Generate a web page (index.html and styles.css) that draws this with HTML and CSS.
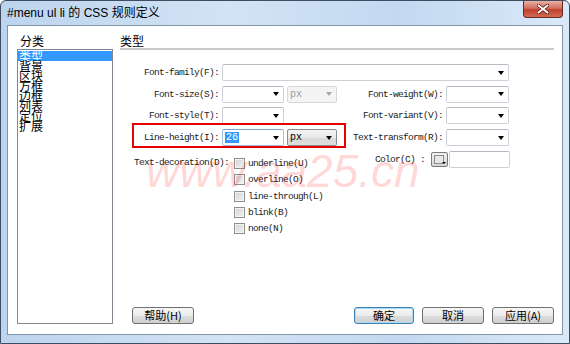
FILE: index.html
```html
<!DOCTYPE html>
<html lang="zh-CN">
<head>
    <meta charset="UTF-8">
    <title>#menu ul li 的 CSS 规则定义</title>
    <link rel="stylesheet" href="styles.css">
</head>
<body>

<div class="window">
    <div class="titlebar">
        <span class="title">#menu ul li 的 CSS 规则定义</span>
        <div class="close">
            <svg width="12" height="10" viewBox="0 0 12 10">
                <path d="M1.5 1.5 L10.5 8.5 M10.5 1.5 L1.5 8.5" stroke="#5a1a12" stroke-width="3.4" stroke-linecap="square"/>
                <path d="M1.5 1.5 L10.5 8.5 M10.5 1.5 L1.5 8.5" stroke="#ffffff" stroke-width="1.8" stroke-linecap="square"/>
            </svg>
        </div>
    </div>

    <div class="client">
        <div class="side">
            <div class="side-label">分类</div>
            <ul class="cat-list">
                <li class="active">类型</li>
                <li>背景</li>
                <li>区块</li>
                <li>方框</li>
                <li>边框</li>
                <li>列表</li>
                <li>定位</li>
                <li>扩展</li>
            </ul>
        </div>

        <div class="panel">
            <div class="panel-head">类型</div>

            <div class="form">
                <label class="lbl">Font-family(F):</label>
                <div class="combo wide"><span class="val"></span><span class="arrow"></span></div>

                <label class="lbl">Font-size(S):</label>
                <div class="combo"><span class="val"></span><span class="arrow"></span></div>
                <div class="combo disabled"><span class="val">px</span><span class="arrow"></span></div>
                <label class="lbl">Font-weight(W):</label>
                <div class="combo"><span class="val"></span><span class="arrow"></span></div>

                <label class="lbl">Font-style(T):</label>
                <div class="combo"><span class="val"></span><span class="arrow"></span></div>
                <div></div>
                <label class="lbl">Font-variant(V):</label>
                <div class="combo"><span class="val"></span><span class="arrow"></span></div>

                <label class="lbl">Line-height(I):</label>
                <div class="combo focus"><span class="val"><span class="sel">26</span></span><span class="arrow"></span></div>
                <div class="combo button"><span class="val">px</span><span class="arrow"></span></div>
                <label class="lbl">Text-transform(R):</label>
                <div class="combo"><span class="val"></span><span class="arrow"></span></div>

                <div class="mark"></div>
            </div>

            <div class="deco">
                <label class="lbl deco-label">Text-decoration(D):</label>
                <div class="checks">
                    <div class="check"><span class="box"></span>underline(U)</div>
                    <div class="check"><span class="box"></span>overline(O)</div>
                    <div class="check"><span class="box"></span>line-through(L)</div>
                    <div class="check"><span class="box"></span>blink(B)</div>
                    <div class="check"><span class="box"></span>none(N)</div>
                </div>
                <div class="color-group">
                    <label class="lbl color-label">Color(C) :</label>
                    <div class="swatch"><span class="swatch-in"></span><span class="swatch-arrow"></span></div>
                    <div class="text-input"></div>
                </div>
            </div>

            <div class="watermark">www.aa25.cn</div>

            <div class="buttons">
                <div class="btn help">帮助(H)</div>
                <div class="btn default">确定</div>
                <div class="btn">取消</div>
                <div class="btn">应用(A)</div>
            </div>
        </div>
    </div>
</div>

</body>
</html>
```

FILE: styles.css
```css
* {
    box-sizing: border-box;
}

body {
    margin: 0;
    font-family: "Noto Sans", "Noto Sans CJK SC", sans-serif;
    font-size: 12px;
    color: #000;
    background: #fff;
}

.window {
    width: 570px;
    height: 344px;
    border: 1px solid #3e4d60;
    border-radius: 6px 6px 0 0;
    background: linear-gradient(to right, #bcd4ee, #d2e3f5 40%, #c3d9f1 70%, #d9e9f8);
    display: flex;
    flex-direction: column;
    overflow: hidden;
}

.titlebar {
    height: 24px;
    display: flex;
    align-items: flex-start;
    padding-left: 6px;
}

.title {
    line-height: 24px;
    font-family: "Liberation Sans", "Noto Sans CJK SC", sans-serif;
    font-size: 12px;
    color: #000;
}

.close {
    margin-left: auto;
    margin-right: 6px;
    width: 40px;
    height: 17px;
    border: 1px solid #6a2a22;
    border-top: none;
    border-radius: 0 0 4px 4px;
    background: linear-gradient(#e8b0a4, #d26e5c 45%, #c0412d 55%, #d06a52);
    display: flex;
    align-items: center;
    justify-content: center;
}

.client {
    margin: 0 6px 8px;
    height: 310px;
    border: 1px solid #8596ab;
    background: #fff;
    display: flex;
    padding: 8px 8px 10px 9px;
}

.side {
    width: 96px;
    display: flex;
    flex-direction: column;
}

.side-label {
    line-height: 14px;
    padding-left: 3px;
    font-family: "Noto Sans CJK SC", sans-serif;
}

.cat-list {
    flex: 1;
    list-style: none;
    margin: 1px 0 0;
    padding: 1px 0 0;
    border: 1px solid #828790;
    font-family: "Noto Sans CJK SC", sans-serif;
    font-size: 12px;
}

.cat-list li {
    line-height: 10px;
    height: 10px;
    padding-left: 1px;
    overflow: visible;
}

.cat-list li.active {
    background: #3399ff;
    color: #fff;
}

.panel {
    width: 434px;
    margin-left: 7px;
    display: flex;
    flex-direction: column;
    position: relative;
}

.panel-head {
    line-height: 14px;
    border-bottom: 2px solid #cacaca;
    font-family: "Noto Sans CJK SC", sans-serif;
}

.lbl {
    font-family: "Liberation Mono", monospace;
    font-size: 9.5px;
    letter-spacing: -0.7px;
    color: #222;
    white-space: nowrap;
}

.form {
    margin-top: 14px;
    margin-left: 0;
    display: grid;
    grid-template-columns: 99px 62px 50px 103px 63px;
    grid-auto-rows: 17px;
    column-gap: 3px;
    row-gap: 4.7px;
    position: relative;
}

.form .lbl {
    display: flex;
    align-items: center;
    justify-content: flex-end;
}

.combo {
    height: 17px;
    border: 1px solid #ccd1d9;
    border-top-color: #b5bac3;
    border-radius: 2px;
    background: #fff;
    display: flex;
    align-items: center;
    padding: 0 4px 0 2px;
}

.combo.wide {
    grid-column: 2 / 6;
}

.combo .val {
    flex: 1;
    font-family: "Liberation Mono", monospace;
    font-size: 10px;
}

.arrow {
    width: 0;
    height: 0;
    border-left: 3.5px solid transparent;
    border-right: 3.5px solid transparent;
    border-top: 4px solid #000;
}

.combo.disabled {
    background: #f4f4f4;
    border-color: #d8d8d8;
    color: #9a9a9a;
}

.combo.disabled .arrow {
    border-top-color: #a8a8a8;
}

.combo.focus {
    border-color: #a6c2df;
    border-top-color: #7ea3c9;
}

.sel {
    background: #3399ff;
    color: #fff;
    padding: 0 1px;
}

.combo.button {
    border-color: #8c8c8c;
    background: linear-gradient(#f4f4f4, #e9e9e9 50%, #d9d9d9 51%, #dedede);
}

.mark {
    position: absolute;
    left: 12px;
    top: 59px;
    width: 214px;
    height: 25px;
    border: 2px solid #e60000;
}

.deco {
    margin-top: 5px;
    display: flex;
    align-items: flex-start;
}

.deco-label {
    width: 114px;
    padding-right: 5px;
    padding-top: 4px;
    line-height: 16.4px;
    text-align: right;
}

.checks {
    width: 141px;
    padding-top: 4px;
}

.check {
    height: 16.4px;
    display: flex;
    align-items: center;
    font-family: "Liberation Mono", monospace;
    font-size: 9.5px;
    letter-spacing: -0.7px;
    color: #222;
}

.box {
    width: 11px;
    height: 11px;
    margin-right: 3px;
    border: 1px solid #8e8f8f;
    background: linear-gradient(135deg, #d4d4d4, #f2f2f2);
    box-shadow: inset 0 0 0 1px #f4f4f4;
}

.color-group {
    display: flex;
    align-items: center;
    height: 17px;
}

.color-label {
    width: 56px;
}

.swatch {
    width: 17px;
    height: 15px;
    border: 1px solid #7a7a7a;
    border-radius: 2px;
    background: linear-gradient(#f2f2f2, #d6d6d6);
    margin-right: 1px;
    position: relative;
}

.swatch-in {
    position: absolute;
    left: 2px;
    top: 2px;
    width: 10px;
    height: 9px;
    border: 1px solid #8a8a8a;
    background: #e8e8e8;
}

.swatch-arrow {
    position: absolute;
    right: 1px;
    bottom: 2px;
    border-left: 2px solid transparent;
    border-right: 2px solid transparent;
    border-top: 2px solid #000;
}

.text-input {
    width: 61px;
    height: 17px;
    border: 1px solid #ccd1d9;
    border-top-color: #b5bac3;
    border-radius: 2px;
    background: #fff;
}

.watermark {
    position: absolute;
    left: 26px;
    top: 114px;
    font-family: "Liberation Sans", sans-serif;
    font-style: italic;
    font-size: 46px;
    line-height: 46px;
    color: rgba(255, 0, 0, 0.17);
    pointer-events: none;
    white-space: nowrap;
}

.buttons {
    margin-top: auto;
    display: flex;
    gap: 8px;
}

.btn {
    width: 62px;
    height: 17px;
    border: 1px solid #707070;
    border-radius: 3px;
    background: linear-gradient(#f6f6f6, #ebebeb 50%, #dddddd 51%, #cfcfcf);
    font-family: "Noto Sans CJK SC", sans-serif;
    font-size: 11px;
    line-height: 15px;
    text-align: center;
}

.btn.help {
    margin-left: 12px;
    margin-right: auto;
}

.btn.default {
    width: 60px;
    border-color: #3c7fb1;
    box-shadow: inset 0 0 0 1px #a8dcf5;
}
```
